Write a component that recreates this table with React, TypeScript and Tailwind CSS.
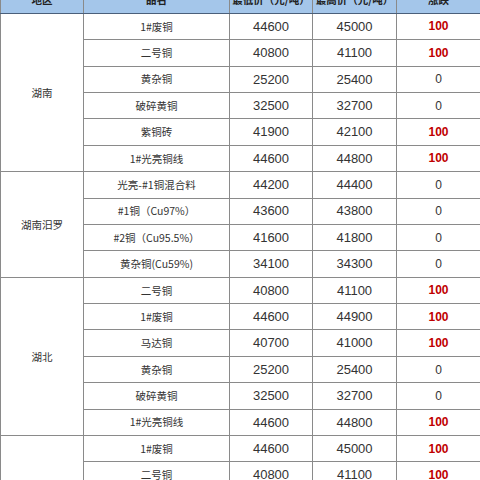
const rows: Array<{ region?: string; span?: number; name: string; low: number; high: number; diff: number }> = [
  { region: "湖南", span: 6, name: "1#废铜", low: 44600, high: 45000, diff: 100 },
  { name: "二号铜", low: 40800, high: 41100, diff: 100 },
  { name: "黄杂铜", low: 25200, high: 25400, diff: 0 },
  { name: "破碎黄铜", low: 32500, high: 32700, diff: 0 },
  { name: "紫铜砖", low: 41900, high: 42100, diff: 100 },
  { name: "1#光亮铜线", low: 44600, high: 44800, diff: 100 },
  { region: "湖南汨罗", span: 4, name: "光亮-#1铜混合料", low: 44200, high: 44400, diff: 0 },
  { name: "#1铜（Cu97%）", low: 43600, high: 43800, diff: 0 },
  { name: "#2铜（Cu95.5%）", low: 41600, high: 41800, diff: 0 },
  { name: "黄杂铜(Cu59%)", low: 34100, high: 34300, diff: 0 },
  { region: "湖北", span: 6, name: "二号铜", low: 40800, high: 41100, diff: 100 },
  { name: "1#废铜", low: 44600, high: 44900, diff: 100 },
  { name: "马达铜", low: 40700, high: 41000, diff: 100 },
  { name: "黄杂铜", low: 25200, high: 25400, diff: 0 },
  { name: "破碎黄铜", low: 32500, high: 32700, diff: 0 },
  { name: "1#光亮铜线", low: 44600, high: 44800, diff: 100 },
  { region: "", span: 4, name: "1#废铜", low: 44600, high: 45000, diff: 100 },
  { name: "二号铜", low: 40800, high: 41100, diff: 100 },
  { name: "黄杂铜", low: 25200, high: 25400, diff: 0 },
  { name: "破碎黄铜", low: 32500, high: 32700, diff: 0 },
];

const cell = "border border-[#8a8a8a] text-center align-middle p-0";
const cjk = "font-['Noto_Sans_CJK_SC',sans-serif] text-[10.5px] text-[#333]";
const num = "font-['Liberation_Sans',sans-serif] text-[13px] text-[#333]";

export default function App() {
  return (
    <div className="h-[480px] w-[480px] overflow-hidden bg-white">
      <table className="-mt-[13.6px] w-[480px] table-fixed border-collapse">
        <colgroup>
          <col className="w-[83px]" />
          <col className="w-[146px]" />
          <col className="w-[83px]" />
          <col className="w-[84px]" />
          <col className="w-[84px]" />
        </colgroup>
        <thead>
          <tr className="h-[26.4px] bg-[#a4c6ea]">
            {["地区", "品名", "最低价（元/吨）", "最高价（元/吨）", "涨跌"].map((h) => (
              <th
                key={h}
                className={`${cell} border-b-[#4a5f7a] font-['Noto_Sans_CJK_SC',sans-serif] text-[10.5px] font-bold text-[#222]`}
              >
                {h}
              </th>
            ))}
          </tr>
        </thead>
        <tbody>
          {rows.map((r, i) => (
            <tr key={i} className="h-[26.4px]">
              {r.span && (
                <td rowSpan={r.span} className={`${cell} ${cjk}`}>
                  {r.region}
                </td>
              )}
              <td className={`${cell} ${cjk}`}>{r.name}</td>
              <td className={`${cell} ${num}`}>{r.low}</td>
              <td className={`${cell} ${num}`}>{r.high}</td>
              <td
                className={`${cell} font-['Liberation_Sans',sans-serif] ${
                  r.diff ? "text-[12px] font-bold text-[#c00000]" : "text-[12px] text-[#333]"
                }`}
              >
                {r.diff}
              </td>
            </tr>
          ))}
        </tbody>
      </table>
    </div>
  );
}
